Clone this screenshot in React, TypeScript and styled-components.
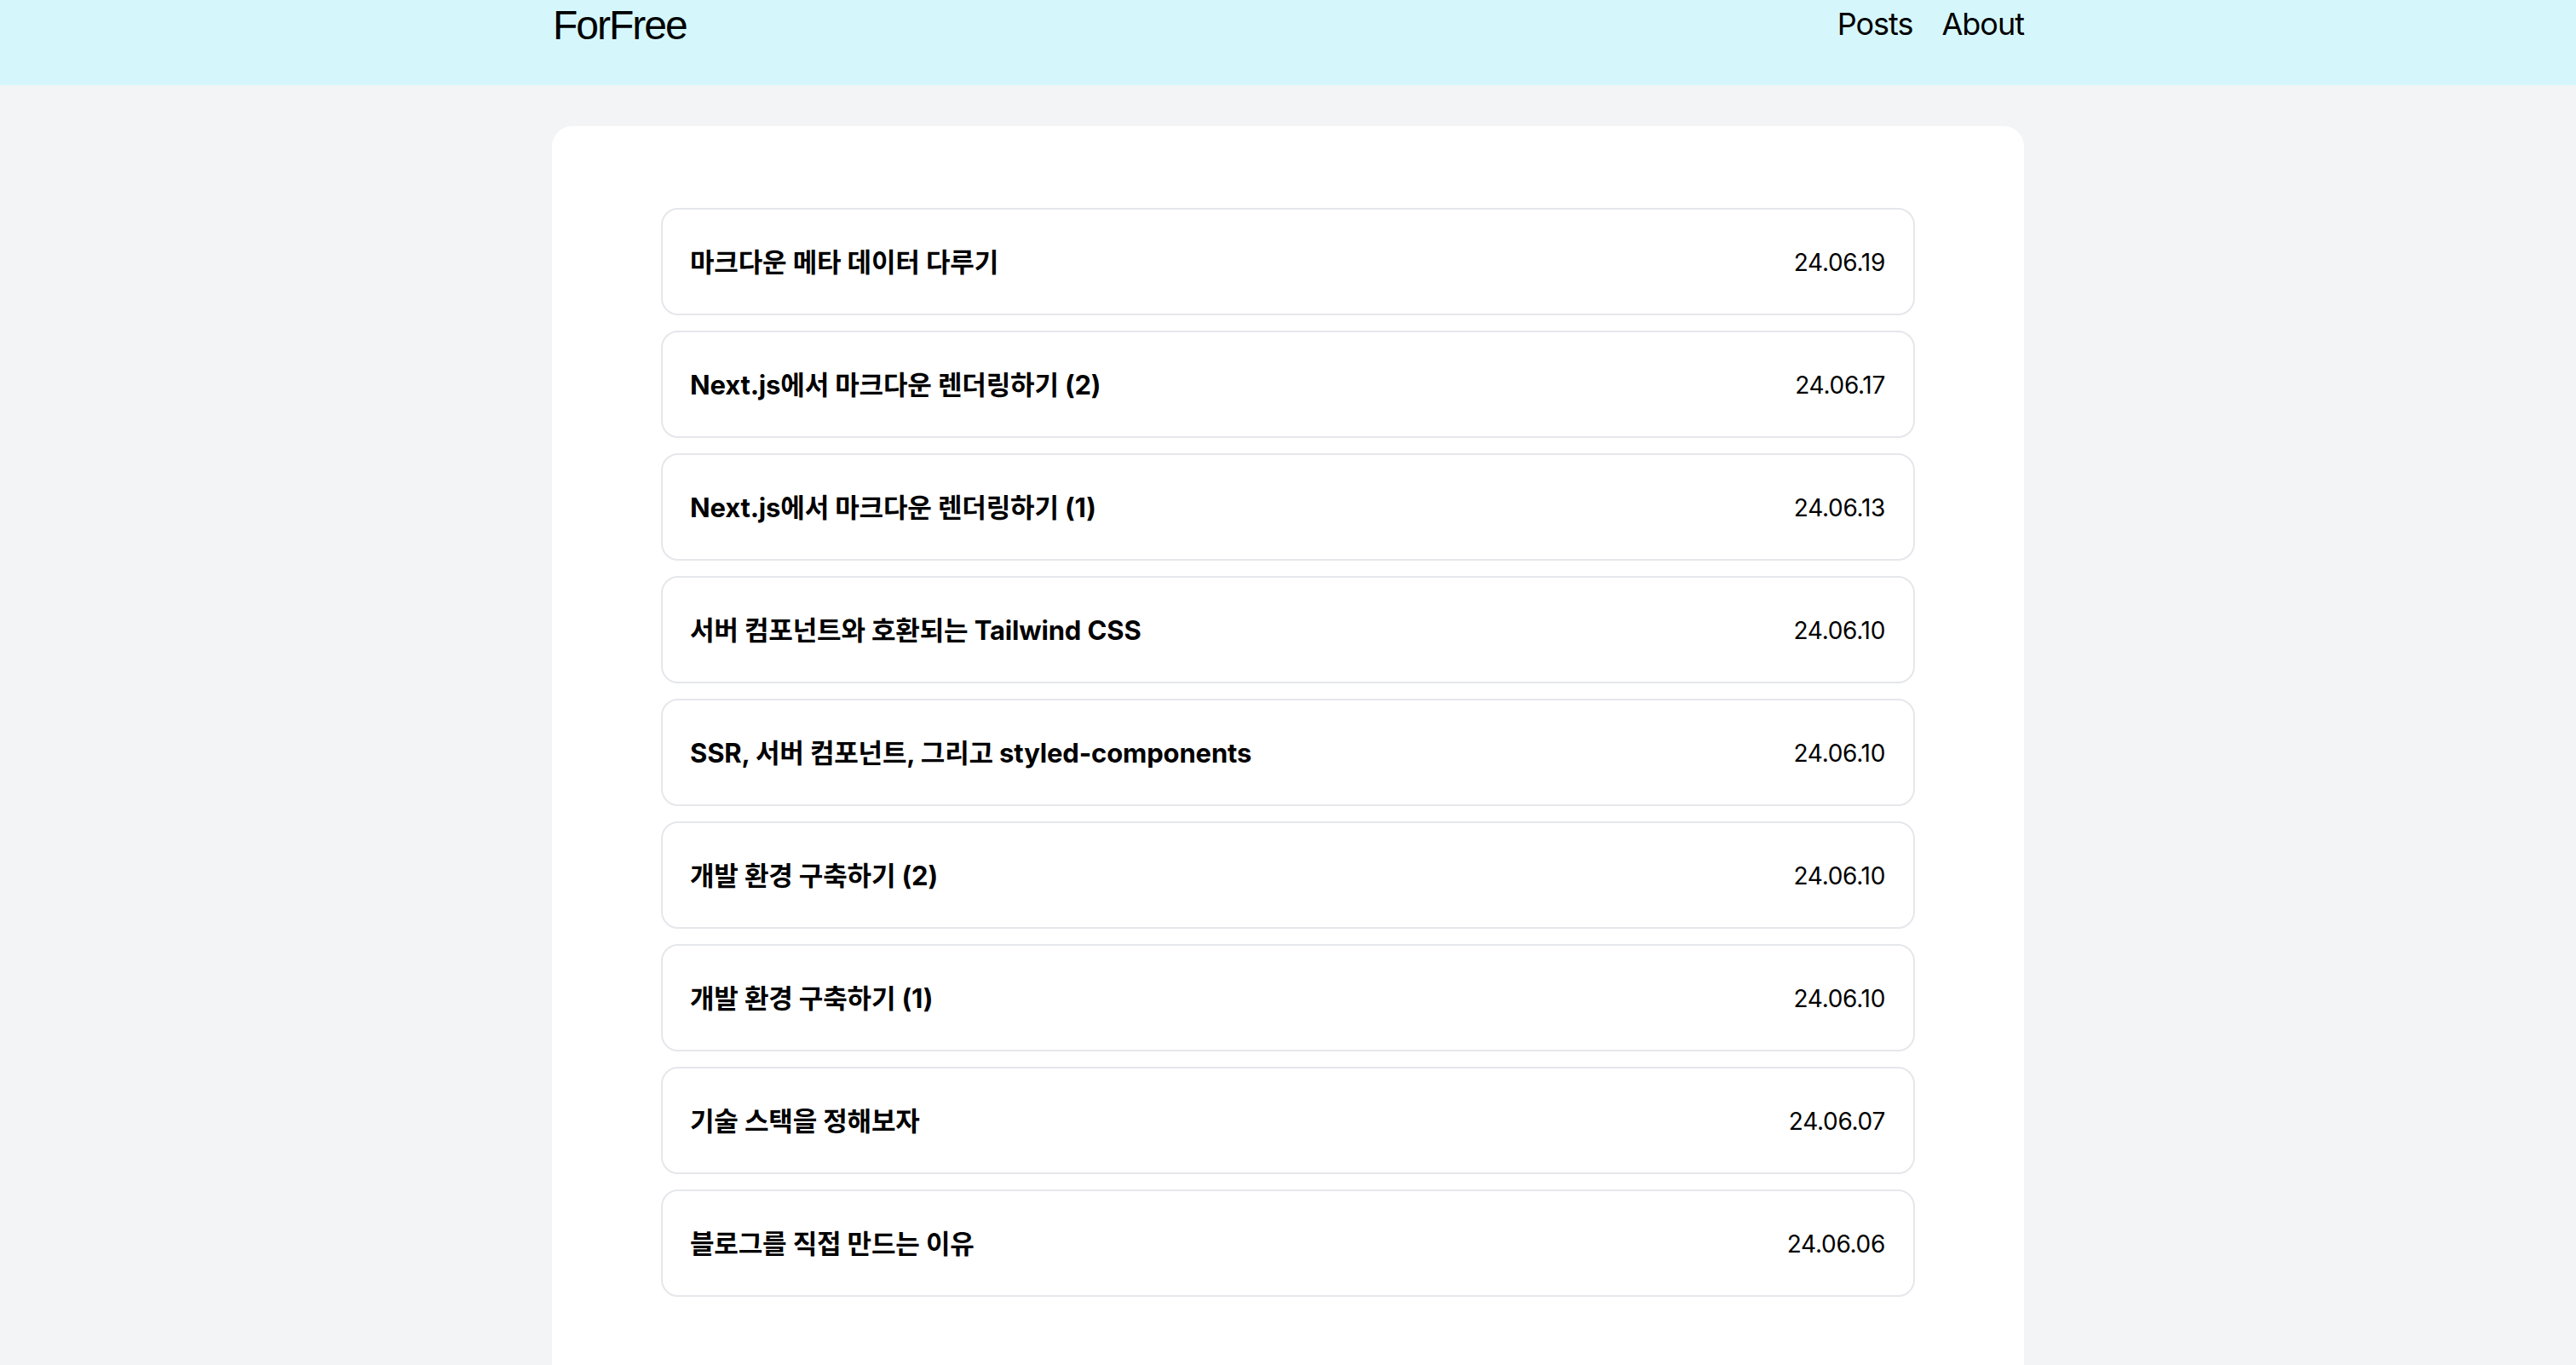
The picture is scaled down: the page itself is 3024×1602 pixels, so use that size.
import React from "react";
import styled, { createGlobalStyle } from "styled-components";

const GlobalStyle = createGlobalStyle`
  html, body {
    margin: 0;
    padding: 0;
    background: #f3f4f6;
    color: #000;
    font-family: "Inter", "Noto Sans CJK KR", sans-serif;
  }
  * { box-sizing: border-box; }
  a { color: inherit; text-decoration: none; }
`;

const Page = styled.div`
  min-height: 1602px;
  display: flex;
  flex-direction: column;
`;

const Header = styled.header`
  height: 100px;
  background: #d5f7fc;
`;

const Container = styled.div`
  width: 1728px;
  margin: 0 auto;
`;

const HeaderInner = styled(Container)`
  display: flex;
  justify-content: space-between;
  align-items: flex-start;
`;

const Logo = styled.a`
  font-family: "Liberation Sans", Arial, sans-serif;
  font-size: 48px;
  line-height: 60px;
  letter-spacing: -2px;
  margin-left: 1px;
`;

const Nav = styled.nav`
  display: flex;
  gap: 34px;
`;

const NavLink = styled.a`
  font-family: "Inter", sans-serif;
  font-size: 36px;
  line-height: 56px;
  letter-spacing: -1px;
`;

const Card = styled(Container)`
  flex: 1;
  margin-top: 48px;
  background: #fff;
  border-radius: 24px 24px 0 0;
  padding: 96px 128px;
`;

const List = styled.ul`
  list-style: none;
  margin: 0;
  padding: 0;
  display: flex;
  flex-direction: column;
  gap: 18px;
`;

const Item = styled.li`
  display: flex;
  justify-content: space-between;
  align-items: center;
  border: 2px solid #e5e7eb;
  border-radius: 20px;
  padding: 38px 33px 36px 32px;
  background: #fff;
`;

const Title = styled.span`
  font-family: "Inter", "Noto Sans CJK KR", sans-serif;
  font-weight: 700;
  font-size: 31px;
  line-height: 48px;
  letter-spacing: -0.15px;
`;

const DateText = styled.span`
  font-family: "Inter", sans-serif;
  font-size: 28px;
  line-height: 40px;
  letter-spacing: -0.3px;
`;

const posts = [
  { title: "마크다운 메타 데이터 다루기", date: "24.06.19" },
  { title: "Next.js에서 마크다운 렌더링하기 (2)", date: "24.06.17" },
  { title: "Next.js에서 마크다운 렌더링하기 (1)", date: "24.06.13" },
  { title: "서버 컴포넌트와 호환되는 Tailwind CSS", date: "24.06.10" },
  { title: "SSR, 서버 컴포넌트, 그리고 styled-components", date: "24.06.10" },
  { title: "개발 환경 구축하기 (2)", date: "24.06.10" },
  { title: "개발 환경 구축하기 (1)", date: "24.06.10" },
  { title: "기술 스택을 정해보자", date: "24.06.07" },
  { title: "블로그를 직접 만드는 이유", date: "24.06.06" },
];

export default function App() {
  return (
    <Page>
      <GlobalStyle />
      <Header>
        <HeaderInner>
          <Logo href="#">ForFree</Logo>
          <Nav>
            <NavLink href="#">Posts</NavLink>
            <NavLink href="#">About</NavLink>
          </Nav>
        </HeaderInner>
      </Header>
      <Card as="main">
        <List>
          {posts.map((p, i) => (
            <Item key={i}>
              <Title>{p.title}</Title>
              <DateText>{p.date}</DateText>
            </Item>
          ))}
        </List>
      </Card>
    </Page>
  );
}
